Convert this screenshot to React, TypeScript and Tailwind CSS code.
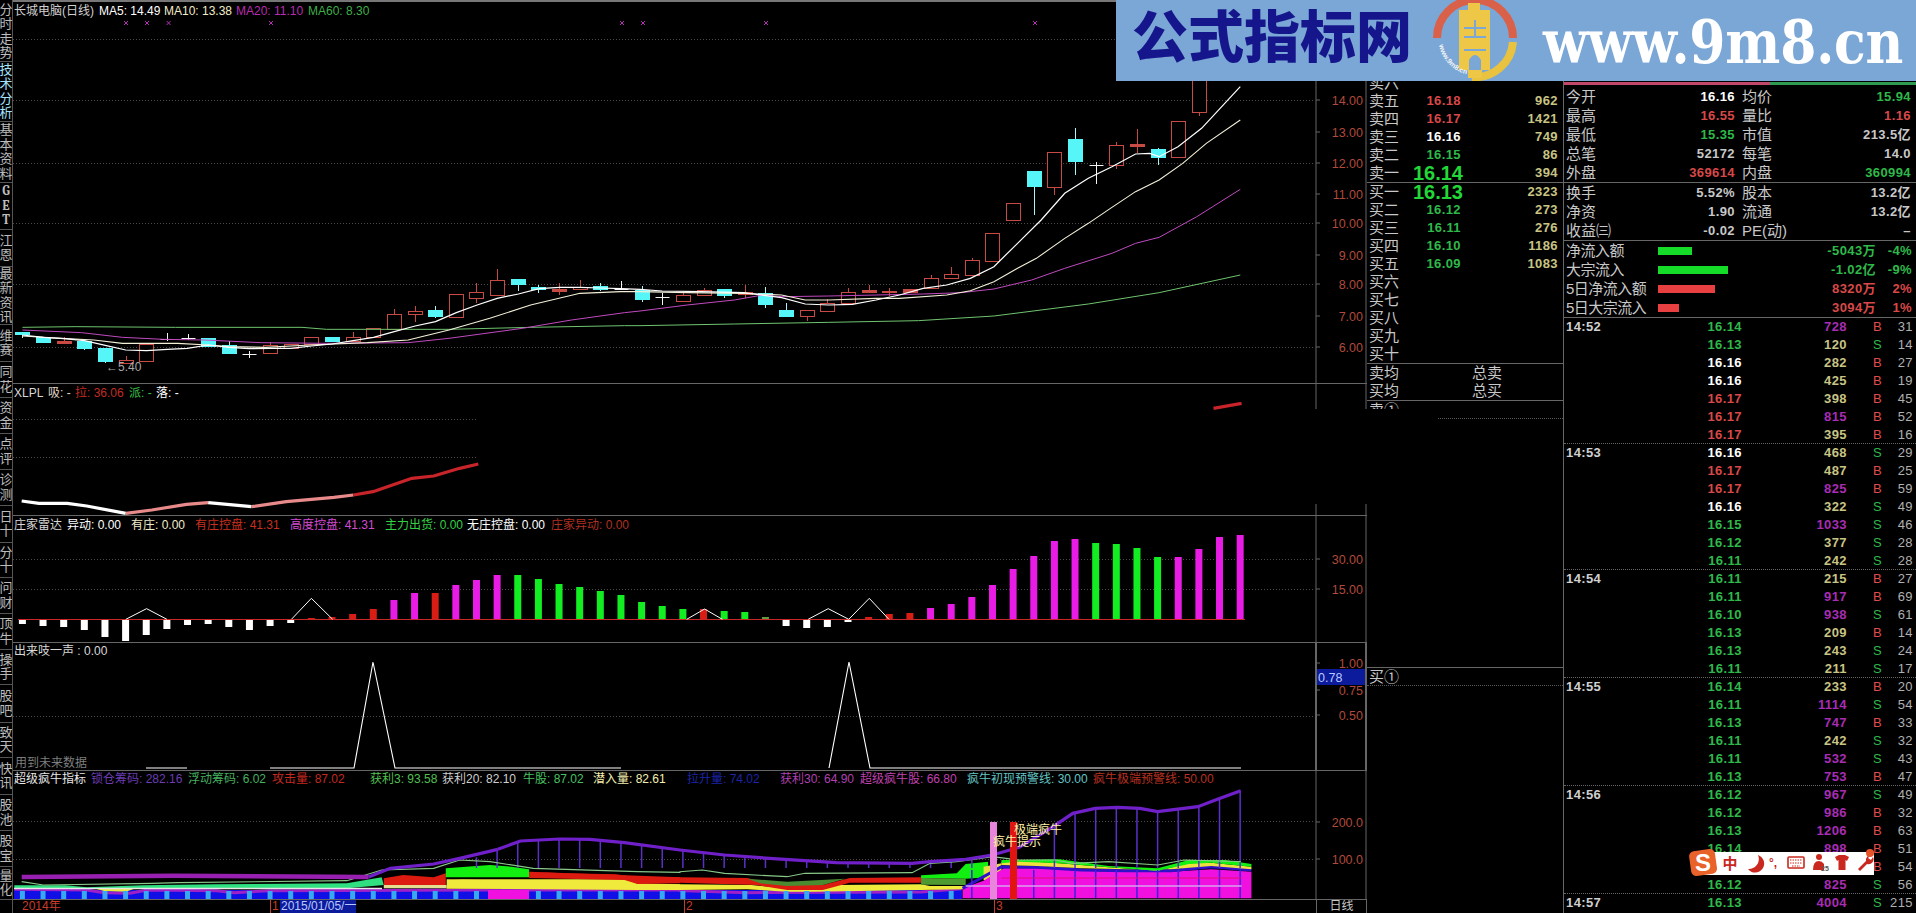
import type { ReactNode } from "react";

type Pt = number[];

// chart geometry was read off the reference crops, hence these conversions
const barX = (i: number) => 22.4 + 20.64 * i;
const main = (l: Pt[], r: Pt[] = []) =>
  [...l.map(([x, y]) => `${x / 2.45},${y / 3}`), ...r.map(([x, y]) => `${640 + x / 2.119},${y / 3}`)].join(" ");
const low = (base: number, l: Pt[], r: Pt[] = []) =>
  [...l.map(([x, y]) => `${x / 2.306},${base + y / 3}`), ...r.map(([x, y]) => `${680 + x / 2.24},${base + y / 3}`)].join(" ");
const lo5 = (l: Pt[], r: Pt[] = []) => low(640, l, r);

const ma5 = main(
  [[55, 1005], [107, 1012], [157, 1016], [207, 1022], [258, 1036], [308, 1050], [359, 1052], [410, 1048], [459, 1045], [510, 1035], [561, 1042], [610, 1046], [662, 1045], [712, 1045], [763, 1038], [814, 1032], [865, 1022], [915, 1012], [966, 995], [1017, 978], [1067, 965], [1118, 938], [1169, 915], [1218, 895], [1270, 882], [1321, 866], [1371, 862], [1421, 862], [1471, 864], [1522, 866]],
  [[0, 868], [47, 873], [130, 875], [220, 878], [300, 893], [350, 912], [400, 915], [450, 913], [500, 900], [550, 885], [600, 865], [650, 855], [700, 835], [750, 800], [800, 730], [850, 660], [900, 580], [950, 535], [1000, 500], [1050, 462], [1080, 460], [1100, 470], [1140, 440], [1190, 385], [1272, 260]],
);
const ma10 = main(
  [[55, 1008], [150, 1015], [230, 1020], [300, 1030], [435, 1030], [510, 1035], [560, 1040], [650, 1042], [760, 1035], [900, 1028], [1000, 1020], [1100, 990], [1200, 955], [1300, 915], [1421, 880], [1521, 875]],
  [[0, 875], [100, 878], [220, 880], [300, 885], [350, 900], [400, 900], [500, 895], [550, 895], [650, 885], [700, 872], [750, 845], [800, 805], [840, 775], [900, 715], [950, 670], [1000, 622], [1050, 575], [1100, 540], [1150, 490], [1200, 430], [1272, 360]],
);
const ma20 = main(
  [[55, 990], [200, 998], [300, 1012], [400, 1018], [500, 1020], [640, 1028], [800, 1030], [1000, 1028], [1100, 1015], [1280, 985], [1400, 960], [1530, 938]],
  [[0, 933], [100, 915], [200, 900], [260, 885], [300, 890], [400, 888], [500, 885], [600, 882], [680, 878], [750, 867], [830, 840], [900, 805], [1000, 760], [1050, 730], [1100, 712], [1180, 650], [1272, 568]],
);
const ma60 = main(
  [[55, 982], [184, 980], [430, 982], [740, 982], [800, 988], [1100, 988], [1300, 982], [1530, 977]],
  [[0, 977], [200, 972], [400, 967], [590, 962], [750, 948], [950, 912], [1100, 878], [1272, 825]],
);

// [index, body top, body bottom, wick top, wick bottom, kind]
const candles: [number, number, number, number, number, string][] = [
  [0, 332, 334, 332, 338, "d"], [1, 337, 342, 337, 342, "d"], [2, 341, 343, 337, 344, "r"], [3, 341, 348, 341, 350, "d"],
  [4, 348, 361, 348, 363, "d"], [5, 360, 363, 356, 363, "u"], [6, 344, 361, 344, 361, "u"], [7, 339, 340, 333, 341, "x"],
  [8, 338, 339, 334, 340, "x"], [9, 338, 346, 338, 346, "d"], [10, 345, 353, 341, 354, "d"], [11, 354, 355, 351, 358, "x"],
  [12, 345, 353, 342, 353, "u"], [13, 344, 348, 344, 348, "u"], [14, 337, 344, 337, 344, "u"], [15, 337, 341, 337, 342, "d"],
  [16, 337, 341, 332, 341, "u"], [17, 328, 337, 328, 337, "u"], [18, 314, 329, 309, 329, "u"], [19, 311, 314, 306, 322, "u"],
  [20, 310, 316, 306, 318, "d"], [21, 294, 317, 294, 317, "u"], [22, 292, 298, 283, 303, "u"], [23, 280, 295, 269, 295, "u"],
  [24, 279, 284, 279, 291, "d"], [25, 287, 289, 285, 293, "d"], [26, 289, 291, 283, 295, "r"], [27, 287, 289, 280, 290, "u"],
  [28, 286, 289, 283, 291, "d"], [29, 289, 290, 281, 290, "x"], [30, 290, 299, 286, 302, "d"], [31, 297, 298, 293, 305, "x"],
  [32, 295, 301, 293, 301, "u"], [33, 290, 295, 288, 295, "u"], [34, 289, 295, 289, 298, "d"], [35, 292, 294, 285, 298, "r"],
  [36, 293, 304, 287, 308, "d"], [37, 310, 316, 303, 316, "d"], [38, 310, 316, 310, 321, "u"], [39, 303, 311, 299, 311, "u"],
  [40, 292, 303, 288, 303, "u"], [41, 290, 292, 285, 293, "r"], [42, 291, 292, 288, 296, "r"], [43, 289, 292, 289, 292, "r"],
  [44, 278, 288, 275, 288, "u"], [45, 274, 278, 267, 279, "u"], [46, 260, 275, 258, 275, "u"], [47, 233, 261, 233, 261, "u"],
  [48, 203, 220, 203, 221, "u"], [49, 171, 186, 171, 215, "d"], [50, 152, 187, 152, 195, "u"], [51, 139, 161, 128, 175, "d"],
  [52, 165, 166, 162, 184, "x"], [53, 145, 165, 142, 169, "u"], [54, 144, 146, 129, 153, "r"], [55, 149, 157, 148, 165, "d"],
  [56, 121, 157, 121, 157, "u"], [57, 20, 112, 20, 116, "u"],
];

const radarBars: [number, string][] = [
  [732, "w"], [738, "w"], [741, "w"], [750, "w"], [771, "w"], [783, "w"], [765, "w"], [747, "w"], [735, "w"], [732, "w"], [741, "w"], [750, "w"], [738, "w"], [729, "w"],
  [714, "r"], [711, "r"], [702, "r"], [687, "r"], [660, "m"], [639, "m"], [639, "r"], [615, "m"], [600, "m"], [585, "m"],
  [585, "g"], [597, "g"], [612, "g"], [621, "g"], [633, "g"], [645, "g"], [666, "g"], [678, "g"], [687, "g"], [687, "r"], [693, "g"], [696, "g"], [711, "o"],
  [738, "w"], [744, "w"], [741, "w"], [726, "w"], [711, "r"], [702, "r"], [699, "r"],
  [684, "m"], [672, "m"], [651, "m"], [615, "m"], [567, "m"], [528, "m"], [483, "m"], [477, "m"],
  [489, "g"], [492, "g"], [504, "g"], [531, "g"], [531, "m"], [507, "m"], [471, "m"], [465, "m"],
];
const radarFill: Record<string, string> = { w: "#ffffff", r: "#d81e14", m: "#e81ce4", g: "#12ee22", o: "#5f9a3c" };

const lockPts: [number, number][] = [
  [1148 / 2.306, 628], [1200 / 2.306, 603], [1290 / 2.306, 597], [1360 / 2.306, 598], [1440 / 2.306, 608], [680, 630],
  [680 + 100 / 2.24, 645], [680 + 200 / 2.24, 655], [680 + 350 / 2.24, 668], [680 + 520 / 2.24, 670], [680 + 560 / 2.24, 665], [680 + 640 / 2.24, 658],
  [680 + 700 / 2.24, 645], [680 + 760 / 2.24, 622], [680 + 830 / 2.24, 565], [680 + 880 / 2.24, 520], [680 + 930 / 2.24, 505], [680 + 980 / 2.24, 502],
  [680 + 1030 / 2.24, 505], [680 + 1070 / 2.24, 515], [680 + 1160 / 2.24, 500], [680 + 1210 / 2.24, 475], [680 + 1256 / 2.24, 452],
];
const lockY = (x: number) => {
  for (let k = 1; k < lockPts.length; k++) {
    const [x0, y0] = lockPts[k - 1];
    const [x1, y1] = lockPts[k];
    if (x <= x1) return y0 + ((y1 - y0) * (x - x0)) / (x1 - x0);
  }
  return 452;
};

const tabs: [string[], string, string][] = [
  [["分", "时", "走", "势"], "h-[60px]", "text-[#bcbcbc]"],
  [["技", "术", "分", "析"], "h-[60px]", "text-[#a8e4ff]"],
  [["基", "本", "资", "料"], "h-[61px]", "text-[#bcbcbc]"],
  [["G", "E", "T"], "h-[47px] font-bold font-serif", "text-[#bcbcbc]"],
  [["江", "恩"], "h-[37px]", "text-[#bcbcbc]"],
  [["最", "新", "资", "讯"], "h-[58px]", "text-[#bcbcbc]"],
  [["维", "赛"], "h-[37px]", "text-[#bcbcbc]"],
  [["同", "花"], "h-[36px]", "text-[#bcbcbc]"],
  [["资", "金"], "h-[36px]", "text-[#bcbcbc]"],
  [["点", "评"], "h-[36px]", "text-[#bcbcbc]"],
  [["诊", "测"], "h-[36px]", "text-[#bcbcbc]"],
  [["日", "十"], "h-[37px]", "text-[#bcbcbc]"],
  [["分", "十"], "h-[35px]", "text-[#bcbcbc]"],
  [["问", "财"], "h-[36px]", "text-[#bcbcbc]"],
  [["顶", "牛"], "h-[36px]", "text-[#bcbcbc]"],
  [["操", "手"], "h-[35px]", "text-[#bcbcbc]"],
  [["股", "吧"], "h-[38px]", "text-[#bcbcbc]"],
  [["致", "天"], "h-[35px]", "text-[#bcbcbc]"],
  [["快", "讯"], "h-[37px]", "text-[#bcbcbc]"],
  [["股", "池"], "h-[36px]", "text-[#bcbcbc]"],
  [["股", "宝"], "h-[36px]", "text-[#bcbcbc]"],
  [["量", "化"], "h-[33px]", "text-[#bcbcbc]"],
];

const asks = [
  ["卖六", "", ""], ["卖五", "16.18", "962"], ["卖四", "16.17", "1421"], ["卖三", "16.16", "749"], ["卖二", "16.15", "86"], ["卖一", "16.14", "394"],
];
const bids = [
  ["买一", "16.13", "2323"], ["买二", "16.12", "273"], ["买三", "16.11", "276"], ["买四", "16.10", "1186"], ["买五", "16.09", "1083"],
  ["买六", "", ""], ["买七", "", ""], ["买八", "", ""], ["买九", "", ""], ["买十", "", ""],
];

const quoteA: [string, string, string, string, string, string][] = [
  ["今开", "16.16", "text-white", "均价", "15.94", "text-[#2fb84a]"],
  ["最高", "16.55", "text-[#d84848]", "量比", "1.16", "text-[#d84848]"],
  ["最低", "15.35", "text-[#2fb84a]", "市值", "213.5亿", "text-[#c8c8c8]"],
  ["总笔", "52172", "text-[#c8c8c8]", "每笔", "14.0", "text-[#c8c8c8]"],
  ["外盘", "369614", "text-[#d84848]", "内盘", "360994", "text-[#2fb84a]"],
];
const quoteB: [string, string, string, string, string, string][] = [
  ["换手", "5.52%", "text-[#c8c8c8]", "股本", "13.2亿", "text-[#c8c8c8]"],
  ["净资", "1.90", "text-[#c8c8c8]", "流通", "13.2亿", "text-[#c8c8c8]"],
  ["收益㈢", "-0.02", "text-[#c8c8c8]", "PE(动)", "–", "text-[#c8c8c8]"],
];
const flows = [
  { label: "净流入额", bar: "w-[34px] bg-[#14dc28]", value: "-5043万", pct: "-4%", color: "text-[#2fb84a]" },
  { label: "大宗流入", bar: "w-[70px] bg-[#14dc28]", value: "-1.02亿", pct: "-9%", color: "text-[#2fb84a]" },
  { label: "5日净流入额", bar: "w-[57px] bg-[#e84040]", value: "8320万", pct: "2%", color: "text-[#d84848]" },
  { label: "5日大宗流入", bar: "w-[21px] bg-[#e84040]", value: "3094万", pct: "1%", color: "text-[#d84848]" },
];

const trades: [string, string, string, [string, string, string, string][]][] = [
  ["14:52", "h-[126px]", "border-solid", [["16.14", "728", "B", "31"], ["16.13", "120", "S", "14"], ["16.16", "282", "B", "27"], ["16.16", "425", "B", "19"], ["16.17", "398", "B", "45"], ["16.17", "815", "B", "52"], ["16.17", "395", "B", "16"]]],
  ["14:53", "h-[126px]", "border-dotted", [["16.16", "468", "S", "29"], ["16.17", "487", "B", "25"], ["16.17", "825", "B", "59"], ["16.16", "322", "S", "49"], ["16.15", "1033", "S", "46"], ["16.12", "377", "S", "28"], ["16.11", "242", "S", "28"]]],
  ["14:54", "h-[108px]", "border-dotted", [["16.11", "215", "B", "27"], ["16.11", "917", "B", "69"], ["16.10", "938", "S", "61"], ["16.13", "209", "B", "14"], ["16.13", "243", "S", "24"], ["16.11", "211", "S", "17"]]],
  ["14:55", "h-[108px]", "border-dotted", [["16.14", "233", "B", "20"], ["16.11", "1114", "S", "54"], ["16.13", "747", "B", "33"], ["16.11", "242", "S", "32"], ["16.11", "532", "S", "43"], ["16.13", "753", "B", "47"]]],
  ["14:56", "h-[108px]", "border-dotted", [["16.12", "967", "S", "49"], ["16.12", "986", "B", "32"], ["16.13", "1206", "B", "63"], ["16.14", "898", "B", "51"], ["16.13", "867", "B", "54"], ["16.12", "825", "S", "56"]]],
  ["14:57", "h-[18px]", "border-dotted", [["16.13", "4004", "S", "215"]]],
];

const priceColor = (p: string) => {
  const v = Number(p);
  if (v > 16.16) return "text-[#d84848]";
  if (v === 16.16) return "text-white";
  return "text-[#2fb84a]";
};

function PaneHead({ items, height }: { items: [string, string][]; height: string }) {
  return (
    <div className={`flex items-center whitespace-nowrap pl-[1px] text-[12px] ${height}`}>
      {items.map(([text, cls]) => (
        <span key={text} className={cls}>
          {text}
        </span>
      ))}
    </div>
  );
}

function Plot({ top, height, children }: { top: number; height: number; children: ReactNode }) {
  return (
    <svg width={1302} height={height} viewBox={`13 ${top} 1302 ${height}`} className="block overflow-hidden">
      {children}
    </svg>
  );
}

function Grid({ ys, to = 1315 }: { ys: number[]; to?: number }) {
  return (
    <>
      {ys.map((y) => (
        <line key={y} x1={13} x2={to} y1={y + 0.5} y2={y + 0.5} stroke="#4a4a4a" strokeDasharray="1 2" />
      ))}
    </>
  );
}

function Axis({
  top,
  height,
  labels,
  lines,
  stroke = 1,
  children,
}: {
  top: number;
  height: number;
  labels: [string, number][];
  lines: [number, number][];
  stroke?: number;
  children?: ReactNode;
}) {
  return (
    <svg width={52} height={height} viewBox={`1315 ${top} 52 ${height}`} className="block shrink-0">
      {lines.map(([a, b]) => (
        <g key={a} stroke="#666666" strokeWidth={stroke}>
          <line x1={1316} x2={1316} y1={a} y2={b} />
          <line x1={1366} x2={1366} y1={a} y2={b} />
        </g>
      ))}
      {children}
      {labels.map(([t, y]) => (
        <g key={t}>
          <line x1={1316} x2={1320} y1={y} y2={y} stroke="#666666" />
          <text x={1363} y={y + 4.5} textAnchor="end" fontSize={12.5} fill="#b04a3c">
            {t}
          </text>
        </g>
      ))}
    </svg>
  );
}

function Candles() {
  return (
    <>
      {candles.map(([i, t, b, wt, wb, kind]) => {
        const x = Math.round(barX(i)) + 0.5;
        if (kind === "x")
          return (
            <g key={i} stroke="#f4f4f4">
              <line x1={x} x2={x} y1={wt} y2={wb} />
              <line x1={x - 7} x2={x + 7} y1={t + 0.5} y2={t + 0.5} />
            </g>
          );
        const color = kind === "d" ? "#55f5f8" : "#c84a44";
        const fill = kind === "u" ? "#000000" : color;
        return (
          <g key={i}>
            <line x1={x} x2={x} y1={wt} y2={wb} stroke={kind === "d" ? "#a8f4f8" : color} />
            <rect x={x - 7} y={t + 0.5} width={14} height={b - t} fill={fill} stroke={color} />
          </g>
        );
      })}
    </>
  );
}

function PricePane() {
  return (
    <Plot top={20} height={363}>
      <Grid ys={[39, 100, 163, 223, 284, 347]} />
      {[126, 147, 168.6, 271, 622, 643, 766, 1035].map((x) => (
        <path key={x} d={`M ${x - 2} 21 L ${x + 2} 25 M ${x + 2} 21 L ${x - 2} 25`} stroke="#b030b0" fill="none" />
      ))}
      <Candles />
      <polyline points={ma60} fill="none" stroke="#6fc46f" strokeWidth={1} />
      <polyline points={ma20} fill="none" stroke="#c04ac0" strokeWidth={1} />
      <polyline points={ma10} fill="none" stroke="#f4f0d8" strokeWidth={1.1} />
      <polyline points={ma5} fill="none" stroke="#ffffff" strokeWidth={1.2} />
      <text x={106} y={371} fontSize={12} fill="#a8a8a8">
        ←5.40
      </text>
    </Plot>
  );
}

function AccumPane() {
  const seg = (pts: Pt[], color: string) => (
    <polyline points={low(380, pts)} fill="none" stroke={color} strokeWidth={3.2} strokeLinejoin="round" />
  );
  return (
    <Plot top={402} height={113}>
      <Grid ys={[419, 457]} to={478} />
      {seg([[50, 363], [90, 370], [155, 370], [200, 378], [290, 400]], "#ffffff")}
      {seg([[290, 400], [350, 390], [430, 373], [480, 368]], "#e88a8a")}
      {seg([[480, 368], [580, 380]], "#ffffff")}
      {seg([[580, 380], [660, 365], [770, 352], [815, 345]], "#e88a8a")}
      {seg([[815, 345], [860, 335], [950, 295], [1000, 288], [1060, 265], [1103, 252]], "#c8242a")}
      <polyline points={low(380, [], [[1195, 85], [1258, 70]])} fill="none" stroke="#c8242a" strokeWidth={3.2} />
    </Plot>
  );
}

function RadarPane() {
  return (
    <Plot top={534} height={108}>
      <Grid ys={[559, 589]} />
      {radarBars.map(([z, kind], i) => {
        const y = 380 + z / 3;
        const top = Math.min(y, 619);
        return <rect key={i} x={barX(i) - 3.5} y={top} width={7} height={Math.abs(y - 619)} fill={radarFill[kind]} />;
      })}
      <line x1={18} x2={1245} y1={619.5} y2={619.5} stroke="#c82828" strokeWidth={1.2} />
      {[
        low(380, [[290, 718], [338, 686], [385, 718]]),
        low(380, [[672, 718], [718, 655], [767, 718]]),
        low(380, [], [[15, 718], [55, 687], [95, 718]]),
        low(380, [], [[287, 718], [332, 686], [378, 718], [424, 655], [468, 718]]),
      ].map((p) => (
        <polyline key={p} points={p} fill="none" stroke="#ffffff" strokeWidth={1} />
      ))}
    </Plot>
  );
}

function SignalPane() {
  return (
    <Plot top={659} height={111}>
      <Grid ys={[716]} />
      <g fill="none" stroke="#ffffff" strokeWidth={1.1}>
        <line x1={146} x2={187} y1={768} y2={768} />
        <polyline points="270,768 354,768 373,662 395,768 621,768" />
        <polyline points="829,768 849,662 870,768 1241,768" />
      </g>
      <text x={15} y={767} fontSize={12} fill="#7e7e7e">
        用到未来数据
      </text>
    </Plot>
  );
}

function BullPane() {
  const ticks = Array.from({ length: 46 }, (_, i) => i).filter((i) => i !== 23 && i !== 24);
  const blueLines = Array.from({ length: 14 }, (_, i) => i + 46);
  const hangers = Array.from({ length: 38 }, (_, i) => i + 22).filter((i) => ![47, 48, 49].includes(i));
  return (
    <Plot top={787} height={112}>
      <Grid ys={[821, 859]} />
      <rect x={14} y={890} width={948} height={9} fill="#1010e6" />
      <polyline
        points={lo5([[33, 748], [200, 750], [240, 758], [300, 760], [340, 750], [500, 752], [540, 758], [620, 752], [1120, 750], [1568, 750]], [[0, 752], [150, 758], [540, 756], [630, 746]])}
        fill="none"
        stroke="#a020c8"
        strokeWidth={3}
      />
      <polygon points={lo5([[33, 736], [150, 736], [200, 742], [330, 736], [500, 733], [800, 730], [880, 712], [885, 735], [800, 745], [33, 745]])} fill="#30e080" />
      <polygon points={lo5([[1030, 718], [1450, 718], [1470, 733], [1568, 733]], [[0, 733], [160, 735], [240, 745], [350, 735], [540, 733], [560, 738], [640, 738], [640, 748], [300, 755], [240, 755], [150, 748], [0, 750]])} fill="#f0ea3c" />
      <polygon points={lo5([[1568, 750], [1470, 750], [1030, 746], [1030, 718], [1568, 733]])} fill="#f0ea3c" />
      <polygon points={lo5([[885, 745], [1030, 745], [1030, 735], [885, 735]])} fill="#e4de90" />
      <polygon points={lo5([[220, 746], [310, 746], [290, 755], [240, 753]])} fill="#f0ea3c" />
      <polygon points={lo5([[885, 715], [930, 705], [1000, 712], [1028, 700], [1028, 735], [885, 735]])} fill="#dc1a10" />
      <polygon points={lo5([[1028, 685], [1130, 675], [1180, 680], [1220, 688], [1220, 712], [1028, 712]])} fill="#12f012" />
      <polygon points={lo5([[1220, 695], [1300, 700], [1420, 703], [1470, 712], [1568, 712]], [[0, 712], [150, 714], [200, 730], [240, 735], [320, 735], [380, 714], [540, 712], [540, 728], [380, 728], [320, 750], [240, 750], [170, 735], [0, 728]])} fill="#dc1a10" />
      <polygon points={lo5([[1568, 730], [1470, 732], [1440, 720], [1220, 714], [1220, 695], [1568, 712]])} fill="#dc1a10" />
      <polygon points={lo5([], [[150, 716], [240, 725], [370, 716], [320, 735], [240, 738], [180, 730]])} fill="#4a8a30" />
      <polygon points={lo5([], [[540, 706], [620, 700], [640, 672], [690, 665], [690, 712], [640, 716], [540, 714]])} fill="#12f012" />
      <polygon points={lo5([], [[540, 714], [640, 716], [640, 735], [540, 734]])} fill="#4f9a30" />
      <polygon points={lo5([], [[680, 680], [720, 670], [720, 720], [680, 720]])} fill="#e8e040" />
      <line x1={14} x2={382} y1={888.5} y2={888.5} stroke="#e8e8e8" strokeWidth={1.6} />
      {ticks.map((i) => (
        <rect key={i} x={barX(i) - 2.5} y={891} width={5} height={8} fill="#38a8f0" />
      ))}
      <rect x={488} y={890} width={41} height={9} fill="#f010e0" />
      <polygon points={lo5([], [[633, 745], [680, 722], [725, 685], [800, 685], [900, 692], [1000, 695], [1100, 695], [1190, 688], [1280, 695], [1280, 775], [633, 775]])} fill="#f010e0" />
      <polyline points={lo5([], [[633, 745], [720, 680], [800, 682], [900, 690], [1000, 692], [1100, 692], [1190, 680], [1280, 690]])} fill="none" stroke="#3010c8" strokeWidth={3} />
      <polygon points={lo5([], [[720, 665], [760, 662], [850, 670], [960, 682], [1070, 692], [1140, 670], [1190, 668], [1280, 680], [1280, 688], [1190, 678], [1100, 688], [1000, 688], [900, 685], [800, 678], [720, 675]])} fill="#f0e040" />
      <polygon points={lo5([], [[720, 660], [760, 660], [850, 658], [960, 678], [1070, 685], [1140, 660], [1220, 660], [1280, 672], [1280, 680], [1190, 668], [1140, 672], [1070, 692], [960, 682], [850, 670], [760, 665], [720, 670]])} fill="#12f012" />
      {blueLines.map((i) => (
        <line key={i} x1={barX(i)} x2={barX(i)} y1={870} y2={898} stroke="#4020e0" strokeWidth={1.5} />
      ))}
      <polyline points={lo5([], [[640, 738], [1258, 738]])} stroke="#d8a0f0" strokeWidth={1.6} />
      <polyline points={lo5([], [[720, 714], [1258, 714]])} stroke="#e01070" strokeWidth={1} />
      {hangers.map((i) => {
        const x = barX(i);
        return <line key={i} x1={x} x2={x} y1={640 + lockY(x) / 3} y2={868} stroke="#5a30c8" strokeWidth={1.5} />;
      })}
      <polyline
        points={lo5([[50, 725], [100, 735], [350, 730], [410, 728], [800, 722], [880, 690], [1000, 685], [1060, 660], [1130, 665], [1230, 685], [1470, 695], [1568, 697]], [[0, 695], [50, 690], [100, 700], [240, 710], [280, 700], [520, 698], [560, 670], [620, 665], [700, 650], [760, 660], [840, 660], [880, 670], [960, 665], [1070, 675], [1130, 660], [1256, 665]])}
        fill="none"
        stroke="#88c888"
        strokeWidth={1.1}
      />
      <polyline points={lo5([[50, 711], [400, 707], [850, 711]])} fill="none" stroke="#9820b0" strokeWidth={4.5} />
      <polyline points={lo5([[850, 711], [900, 685], [1000, 672], [1060, 655], [1148, 628]])} fill="none" stroke="#7020c8" strokeWidth={3.2} />
      <polyline points={lockPts.map(([x, y]) => `${x},${640 + y / 3}`).join(" ")} fill="none" stroke="#7020c8" strokeWidth={3.2} />
      <rect x={990} y={822} width={7} height={77} fill="#e884dc" />
      <rect x={1010} y={822} width={7} height={77} fill="#e01410" />
      <g fontSize={12} fill="#fff2a8">
        <text x={1014} y={834}>极端疯牛</text>
        <text x={1017} y={846}>提示</text>
        <text x={993} y={846}>疯牛</text>
      </g>
    </Plot>
  );
}

function Rail() {
  return (
    <aside className="flex h-[913px] w-[13px] shrink-0 flex-col overflow-hidden border-r border-[#555555] pt-[2px]">
      {tabs.map(([chars, size, color]) => (
        <div key={chars.join("")} className={`flex shrink-0 flex-col items-center justify-center overflow-hidden border-b border-[#555555] text-[13px] leading-[14.5px] ${size} ${color}`}>
          {chars.map((c, i) => (
            <span key={i}>{c}</span>
          ))}
        </div>
      ))}
    </aside>
  );
}

function ChartColumn() {
  return (
    <main className="flex h-[913px] w-[1354px] shrink-0 flex-col">
      <div className="h-[2px] bg-[#777777]" />
      <section className="flex h-[382px] border-b border-[#666666]">
        <div className="w-[1302px]">
          <PaneHead
            height="h-[18px]"
            items={[
              ["长城电脑(日线)", "w-[85px] text-[#d0d0d0]"],
              ["MA5: 14.49", "w-[65px] text-white"],
              ["MA10: 13.38", "w-[72px] text-[#f0ecc8]"],
              ["MA20: 11.10", "w-[72px] text-[#b82cb0]"],
              ["MA60: 8.30", "text-[#3fae4a]"],
            ]}
          />
          <PricePane />
        </div>
        <Axis
          top={2}
          height={381}
          lines={[[2, 383]]}
          labels={[["14.00", 100], ["13.00", 132], ["12.00", 163], ["11.00", 194], ["10.00", 223], ["9.00", 255], ["8.00", 284], ["7.00", 316], ["6.00", 347]]}
        />
      </section>
      <section className="flex h-[132px] border-b border-[#666666]">
        <div className="w-[1302px]">
          <PaneHead
            height="h-[18px]"
            items={[
              ["XLPL", "w-[34px] text-[#d8d8d8]"],
              ["吸: -", "w-[27px] text-[#e0d8c8]"],
              ["拉: 36.06", "w-[54px] text-[#c02c24]"],
              ["派: -", "w-[27px] text-[#38c048]"],
              ["落: -", "text-white"],
            ]}
          />
          <AccumPane />
        </div>
        <Axis top={384} height={131} lines={[[384, 409], [504, 515]]} labels={[]} />
      </section>
      <section className="flex h-[127px] border-b border-[#666666]">
        <div className="w-[1302px]">
          <PaneHead
            height="h-[18px]"
            items={[
              ["庄家雷达", "w-[53px] text-[#d8d8d8]"],
              ["异动: 0.00", "w-[64px] text-white"],
              ["有庄: 0.00", "w-[64px] text-[#f0ecc8]"],
              ["有庄控盘: 41.31", "w-[95px] text-[#c8301f]"],
              ["高度控盘: 41.31", "w-[95px] text-[#d24cd2]"],
              ["主力出货: 0.00", "w-[82px] text-[#34d044]"],
              ["无庄控盘: 0.00", "w-[84px] text-white"],
              ["庄家异动: 0.00", "text-[#b03020]"],
            ]}
          />
          <RadarPane />
        </div>
        <Axis top={516} height={126} lines={[[516, 642]]} labels={[["30.00", 559], ["15.00", 589]]} />
      </section>
      <section className="flex h-[128px] border-b border-[#666666]">
        <div className="w-[1302px]">
          <PaneHead height="h-[16px]" items={[["出来吱一声 : 0.00", "text-[#d8d8d8]"]]} />
          <SignalPane />
        </div>
        <Axis top={643} height={127} lines={[[643, 770]]} stroke={2} labels={[["1.00", 663], ["0.75", 690], ["0.50", 715]]}>
          <rect x={1317} y={669} width={48} height={16} fill="#0c1a9c" />
          <text x={1318} y={681.5} fontSize={12.5} fill="#b8c8ff">
            0.78
          </text>
        </Axis>
      </section>
      <section className="flex h-[129px] border-b border-[#666666]">
        <div className="w-[1302px]">
          <PaneHead
            height="h-[16px]"
            items={[
              ["超级疯牛指标", "w-[77px] text-[#e8e8e8]"],
              ["锁仓筹码: 282.16", "w-[97px] text-[#6c3cb4]"],
              ["浮动筹码: 6.02", "w-[84px] text-[#44b060]"],
              ["攻击量: 87.02", "w-[98px] text-[#c42820]"],
              ["获利3: 93.58", "w-[72px] text-[#50c050]"],
              ["获利20: 82.10", "w-[81px] text-[#cfcfcf]"],
              ["牛股: 87.02", "w-[70px] text-[#48c060]"],
              ["潜入量: 82.61", "w-[94px] text-[#f4f0b0]"],
              ["拉升量: 74.02", "w-[93px] text-[#1c24a8]"],
              ["获利30: 64.90", "w-[80px] text-[#b040b0]"],
              ["超级疯牛股: 66.80", "w-[107px] text-[#c040b0]"],
              ["疯牛初现预警线: 30.00", "w-[126px] text-[#64c4c4]"],
              ["疯牛极端预警线: 50.00", "text-[#b83020]"],
            ]}
          />
          <BullPane />
        </div>
        <Axis top={771} height={128} lines={[[771, 899]]} labels={[["200.0", 822], ["100.0", 859]]} />
      </section>
      <footer className="flex h-[13px] items-center overflow-hidden whitespace-nowrap text-[12px] leading-[13px]">
        <span className="w-[257px] pl-[9px] text-[#c83c2c]">2014年</span>
        <span className="w-[10px] border-l border-[#c83c2c] pl-[1px] text-[#c83c2c]">1</span>
        <span className="w-[76px] bg-[#0c1a9c] pl-[1px] text-[#b8c8ff]">2015/01/05/一</span>
        <span className="w-[328px]" />
        <span className="w-[310px] border-l border-[#c83c2c] pl-[1px] text-[#c83c2c]">2</span>
        <span className="w-[322px] border-l border-[#c83c2c] pl-[1px] text-[#c83c2c]">3</span>
        <span className="h-full w-[51px] border-x border-[#666666] text-center text-[#c8c8c8]">日线</span>
      </footer>
    </main>
  );
}

function BookRow({ row, big }: { row: string[]; big: boolean }) {
  const [label, price, vol] = row;
  return (
    <div className="grid h-[18px] grid-cols-[52px_40px_1fr] items-center pl-[2px] pr-[5px] leading-[18px]">
      <span className="text-[15px] text-[#c8c8c8]">{label}</span>
      {big ? (
        <span className="-ml-[12px] w-[54px] text-right text-[20px] font-bold text-[#22d838]">{price}</span>
      ) : (
        <span className={`text-right text-[13px] font-bold tracking-[0.4px] ${priceColor(price)}`}>{price}</span>
      )}
      <span className="text-right text-[13px] font-bold tracking-[0.4px] text-[#c8c484]">{vol}</span>
    </div>
  );
}

function OrderBook() {
  return (
    <section className="h-[913px] w-[197px] shrink-0 border-r border-[#666666] pt-[74px]">
      {asks.map((r) => (
        <BookRow key={r[0]} row={r} big={r[0] === "卖一"} />
      ))}
      <div className="h-[1px] bg-[#666666]" />
      {bids.map((r) => (
        <BookRow key={r[0]} row={r} big={r[0] === "买一"} />
      ))}
      <div className="h-[1px] bg-[#666666]" />
      <div className="grid h-[18px] grid-cols-[103px_1fr] pl-[2px] text-[15px] leading-[18px] text-[#c8c8c8]">
        <span>卖均</span>
        <span>总卖</span>
      </div>
      <div className="grid h-[18px] grid-cols-[103px_1fr] pl-[2px] text-[15px] leading-[18px] text-[#c8c8c8]">
        <span>买均</span>
        <span>总买</span>
      </div>
      <div className="h-[1px] bg-[#666666]" />
      <div className="h-[8px] overflow-hidden pl-[2px] text-[15px] leading-[18px] text-[#c8c8c8]">卖①</div>
      <div className="ml-[71px] mt-[9px] border-t border-dotted border-[#555555]" />
      <div className="h-[248px]" />
      <div className="h-[18px] border-t border-[#666666] pl-[2px] text-[15px] leading-[17px] text-[#c8c8c8]">买①</div>
      <div className="border-t border-dotted border-[#555555]" />
    </section>
  );
}

function QuoteRows({ rows }: { rows: [string, string, string, string, string, string][] }) {
  return (
    <>
      {rows.map(([a, av, ac, b, bv, bc]) => (
        <div key={a} className="grid h-[19px] grid-cols-[38px_131px_48px_1fr] items-center pl-[2px] pr-[5px] leading-[19px]">
          <span className="whitespace-nowrap text-[15px] text-[#c8c8c8]">{a}</span>
          <span className={`text-right text-[13px] font-bold tracking-[0.4px] ${ac}`}>{av}</span>
          <span className="whitespace-nowrap pl-[7px] text-[15px] text-[#c8c8c8]">{b}</span>
          <span className={`text-right text-[13px] font-bold tracking-[0.4px] ${bc}`}>{bv}</span>
        </div>
      ))}
    </>
  );
}

function QuotePanel() {
  return (
    <section className="h-[913px] w-[352px] shrink-0 overflow-hidden pt-[82px]">
      <div className="mb-[2px] flex h-[3px]">
        <div className="w-[206px] bg-[#c0486a]" />
        <div className="flex-1 bg-[#2f9a50]" />
      </div>
      <QuoteRows rows={quoteA} />
      <div className="h-[1px] bg-[#666666]" />
      <QuoteRows rows={quoteB} />
      <div className="h-[1px] bg-[#666666]" />
      {flows.map((f) => (
        <div key={f.label} className="grid h-[19px] grid-cols-[92px_1fr_36px] items-center pl-[2px] pr-[4px] leading-[19px]">
          <span className="whitespace-nowrap text-[15px] tracking-[-0.5px] text-[#c8c8c8]">{f.label}</span>
          <div className="flex items-center justify-between">
            <div className={`h-[8px] ${f.bar}`} />
            <span className={`text-[13px] font-bold tracking-[0.4px] ${f.color}`}>{f.value}</span>
          </div>
          <span className={`text-right text-[13px] font-bold tracking-[0.4px] ${f.color}`}>{f.pct}</span>
        </div>
      ))}
      {trades.map(([time, size, line, rows]) => (
        <div key={time} className={`border-t border-[#666666] pl-[2px] ${size} ${line}`}>
          {rows.map(([price, vol, side, count], i) => (
            <div key={i} className="grid h-[18px] grid-cols-[176px_105px_35px_31px] items-center text-[13px] font-bold leading-[18px] tracking-[0.4px]">
              <div className="flex justify-between">
                <span className="text-[#d0d0d0]">{i === 0 ? time : ""}</span>
                <span className={priceColor(price)}>{price}</span>
              </div>
              <span className={`text-right ${Number(vol) >= 500 ? "text-[#a82cb4]" : "text-[#c8c484]"}`}>{vol}</span>
              <span className={`text-right font-normal ${side === "B" ? "text-[#e04c4c]" : "text-[#2fb84a]"}`}>{side}</span>
              <span className="text-right font-normal text-[#b0b0b0]">{count}</span>
            </div>
          ))}
        </div>
      ))}
    </section>
  );
}

function SiteLogo() {
  return (
    <svg width={90} height={81} viewBox="0 0 90 81" className="shrink-0">
      <path d="M 7 38 A 38 38 0 0 1 83 38" fill="none" stroke="#d9614a" strokeWidth={8} />
      <path d="M 83 42 A 38 38 0 0 1 42 77" fill="none" stroke="#e9c23f" strokeWidth={8} />
      <path d="M 38 3 H 50 V 10 H 60 V 70 H 52 V 78 H 38 V 70 H 29 V 10 H 38 Z" fill="#edc745" />
      <path d="M 34 28 H 56 M 34 37 H 56 M 34 50 H 56 M 45 20 V 37" stroke="#7ba7d7" strokeWidth={2} />
      <path d="M 39 70 V 60 Q 45 50 51 60 V 70 Z" fill="#7ba7d7" />
      <path id="logoRing" d="M 9 45 A 37 37 0 0 0 41 75" fill="none" />
      <text fontSize={7} fill="#f4f4f4" fontWeight={700}>
        <textPath href="#logoRing">www.9m8.cn</textPath>
      </text>
    </svg>
  );
}

function Banner() {
  return (
    <div className="absolute right-0 top-0 flex h-[81px] w-[800px] items-center overflow-hidden bg-[#7ba7d7] pb-[6px]">
      <span className="ml-[16px] w-[298px] shrink-0 whitespace-nowrap text-[56px] font-black leading-[60px] text-[#16168c]">公式指标网</span>
      <div className="flex h-[81px] w-[113px] shrink-0 items-center pt-[6px]">
        <SiteLogo />
      </div>
      <span className="inline-block origin-top scale-y-[1.16] whitespace-nowrap text-[52px] font-bold leading-[52px] tracking-[-0.2px] text-white [font-family:'DejaVu_Serif',serif]">www.9m8.cn</span>
    </div>
  );
}

function ImeBar() {
  return (
    <svg width={190} height={30} viewBox="0 0 190 30" className="absolute left-[1688px] top-[848px]">
      <rect x={10} y={4} width={176} height={23} fill="#ffffff" />
      <rect x={2} y={2} width={26} height={25} rx={5} fill="#e8622a" transform="rotate(-8 15 14)" />
      <text x={15} y={23} textAnchor="middle" fontSize={24} fontWeight={700} fill="#ffffff">
        S
      </text>
      <text x={42} y={21} textAnchor="middle" fontSize={15} fontWeight={700} fill="#c8281e">
        中
      </text>
      <path d="M 70 7 A 9 9 0 1 1 60 21 A 10 10 0 0 0 70 7 Z" fill="#c8281e" />
      <text x={85} y={19} textAnchor="middle" fontSize={12} fontWeight={700} fill="#c8281e">
        °,
      </text>
      <rect x={100} y={9} width={16} height={11} rx={1} fill="none" stroke="#c8281e" strokeWidth={1.6} />
      <path d="M 102 12 H 114 M 102 15 H 114 M 104 18 H 112" stroke="#c8281e" strokeDasharray="1.5 1" />
      <circle cx={131} cy={9} r={3} fill="#c8281e" />
      <path d="M 125 22 Q 125 13 131 13 Q 134 13 136 16 L 136 22 Z" fill="#c8281e" />
      <text x={137} y={23} textAnchor="middle" fontSize={7} fontWeight={700} fill="#555555">
        25
      </text>
      <path d="M 147 9 L 151 7 H 157 L 161 9 L 159 13 L 157.5 12 V 22 H 150.5 V 12 L 149 13 Z" fill="#c8281e" />
      <path d="M 170 21 L 178 13 A 5 5 0 0 1 183 7 L 180 10 L 183 12 L 185 9 A 5 5 0 0 1 179 16 L 172 23 Z" fill="#c8281e" />
      <circle cx={182} cy={5} r={4} fill="#e8542a" />
    </svg>
  );
}

export default function App() {
  return (
    <div className="relative flex h-[913px] w-[1916px] overflow-hidden bg-black text-[#c8c8c8] [font-family:'Liberation_Sans','Noto_Sans_CJK_SC',sans-serif]">
      <Rail />
      <ChartColumn />
      <OrderBook />
      <QuotePanel />
      <Banner />
      <ImeBar />
    </div>
  );
}
